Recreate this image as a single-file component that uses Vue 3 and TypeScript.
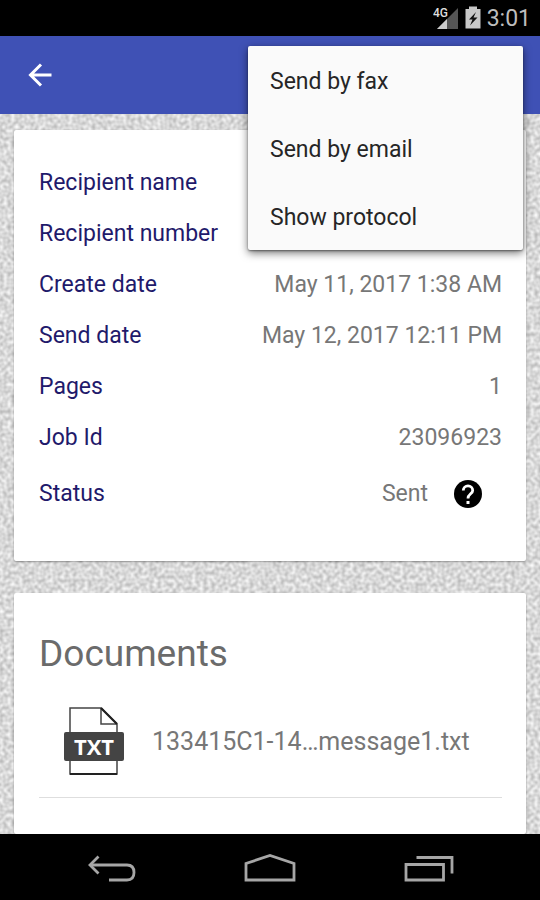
<script setup lang="ts">
interface Detail {
  label: string
  value: string
}

const menuItems: string[] = ['Send by fax', 'Send by email', 'Show protocol']

const details: Detail[] = [
  { label: 'Recipient name', value: '' },
  { label: 'Recipient number', value: '' },
  { label: 'Create date', value: 'May 11, 2017 1:38 AM' },
  { label: 'Send date', value: 'May 12, 2017 12:11 PM' },
  { label: 'Pages', value: '1' },
  { label: 'Job Id', value: '23096923' },
]

const documents: string[] = ['133415C1-14…message1.txt']
</script>

<template>
  <div class="screen">
    <div class="status-bar">
      <svg class="signal" width="26" height="24" viewBox="0 0 26 24" aria-hidden="true">
        <path d="M25 2V23H4Z" fill="#555" />
        <path d="M14 13V23H4Z" fill="#ccc" />
        <text x="0" y="11" class="network">4G</text>
      </svg>
      <svg width="16" height="24" viewBox="0 0 16 24" aria-hidden="true">
        <path d="M4 0.500H12V3H15.500V22.500H0.500V3H4Z" fill="#c8c8c8" />
        <path d="M11 6L4 13.500H7.500L5 19.500L12.500 11.500H8.500Z" fill="#111" />
      </svg>
      <span class="clock">3:01</span>
    </div>

    <header class="app-bar">
      <button class="back" type="button" aria-label="Back">
        <svg width="24" height="24" viewBox="0 0 24 24" fill="none" stroke="#fff" stroke-width="3">
          <path d="M23.500 12H3M13 1.500L2.500 12L13 22.500" />
        </svg>
      </button>
      <div class="menu" role="menu">
        <button v-for="item in menuItems" :key="item" type="button" role="menuitem">{{ item }}</button>
      </div>
    </header>

    <main class="content">
      <svg class="texture" aria-hidden="true">
        <filter id="grain" x="0" y="0" width="100%" height="100%" color-interpolation-filters="sRGB">
          <feTurbulence type="fractalNoise" baseFrequency="0.26" numOctaves="1" seed="4" />
          <feColorMatrix
            values="0.4 0 0 0 0.650  0.4 0 0 0 0.650  0.4 0 0 0 0.650  0 0 0 0 1"
          />
        </filter>
        <rect width="100%" height="100%" filter="url(#grain)" />
      </svg>

      <section class="card summary">
        <dl>
          <div v-for="detail in details" :key="detail.label" class="row">
            <dt>{{ detail.label }}</dt>
            <dd>{{ detail.value }}</dd>
          </div>
          <div class="row status">
            <dt>Status</dt>
            <dd>
              <span>Sent</span>
              <button class="help" type="button" aria-label="Status help">
                <svg width="28" height="28" viewBox="0 0 28 28">
                  <circle cx="14" cy="14" r="14" fill="#000" />
                  <path
                    d="M9.300 10.500A4.700 4.700 0 0 1 18.700 10.500C18.700 13.800 14 14 14 18.500"
                    fill="none"
                    stroke="#fff"
                    stroke-width="2.800"
                  />
                  <path d="M12.500 21H15.500V24H12.500Z" fill="#fff" />
                </svg>
              </button>
            </dd>
          </div>
        </dl>
      </section>

      <section class="card documents">
        <h2>Documents</h2>
        <ul>
          <li v-for="name in documents" :key="name">
            <svg width="62" height="70" viewBox="0 0 62 70" aria-hidden="true">
              <path
                d="M6 1H37L53 17V67H6ZM37 1V17H53"
                fill="#fff"
                stroke="#444"
                stroke-width="1.500"
              />
              <path d="M37 1L53 17M6 67H53" stroke="#222" stroke-width="2.200" />
              <rect x="0" y="25" width="60" height="29" rx="2" fill="#444" />
              <text x="30" y="48" text-anchor="middle" class="file-type">TXT</text>
            </svg>
            <span>{{ name }}</span>
          </li>
        </ul>
      </section>
    </main>

    <nav class="nav-bar">
      <button type="button" aria-label="Back">
        <svg width="50" height="30" viewBox="0 0 50 30" fill="none" stroke="#a6a6a6" stroke-width="2.800">
          <path d="M4 11H41Q48 11 48 18.500T41 26H23" />
          <path d="M12.500 2.500L4 11L12.500 19.500" />
        </svg>
      </button>
      <button type="button" aria-label="Home">
        <svg width="52" height="30" viewBox="0 0 52 30" fill="none" stroke="#a6a6a6" stroke-width="2.800">
          <path d="M2 26V9.500L26 1.500L50 9.500V26Z" />
        </svg>
      </button>
      <button type="button" aria-label="Recent apps">
        <svg width="50" height="30" viewBox="0 0 50 30" fill="none" stroke="#a6a6a6" stroke-width="2.800">
          <path d="M2 10.500H39.500V26H2ZM12.500 3.500H48V19.500" />
        </svg>
      </button>
    </nav>
  </div>
</template>

<style>
body {
  margin: 0;
}
</style>

<style scoped>
.screen {
  display: flex;
  flex-direction: column;
  height: 100vh;
  font-family: Roboto, "Liberation Sans", sans-serif;
  font-size: 23px;
  line-height: 28px;
  color: #777;
}

button {
  padding: 0;
  border: 0;
  background: none;
  font: inherit;
  color: inherit;
}

svg {
  display: block;
}

.status-bar {
  display: flex;
  align-items: center;
  justify-content: flex-end;
  gap: 6px;
  height: 36px;
  padding-right: 9px;
  background: #000;
}

.network {
  font-size: 12px;
  font-weight: 500;
  fill: #ddd;
}

.clock {
  padding-top: 2px;
  color: #bdbdbd;
}

.app-bar {
  position: relative;
  z-index: 1;
  display: flex;
  align-items: center;
  height: 78px;
  padding: 0 28px;
  background: #3f51b5;
}

.menu {
  position: absolute;
  top: 10px;
  right: 17px;
  display: flex;
  flex-direction: column;
  width: 275px;
  border-radius: 2px;
  background: #fafafa;
  box-shadow: 0 3px 8px rgba(0, 0, 0, 0.55), 0 1px 2px rgba(0, 0, 0, 0.4);
}

.menu button {
  height: 68px;
  padding: 3px 22px 0;
  text-align: left;
  color: #262626;
}

.content {
  position: relative;
  display: flex;
  flex: 1;
  flex-direction: column;
  gap: 32px;
  min-height: 0;
  padding: 16px 14px 1px;
  overflow: hidden;
  background: #d6d6d6;
}

.texture {
  position: absolute;
  inset: 0;
  width: 100%;
  height: 100%;
}

.card {
  position: relative;
  padding: 27px 24px 36px 25px;
  border-radius: 2px;
  background: #fff;
  box-shadow: 0 1px 2px rgba(0, 0, 0, 0.35);
}

dl,
dd,
h2,
ul {
  margin: 0;
  padding: 0;
}

.row {
  display: flex;
  align-items: center;
  justify-content: space-between;
  height: 51px;
}

dt {
  color: #1f1a6b;
}

.status {
  height: 62px;
}

.status dd {
  display: flex;
  align-items: center;
  gap: 26px;
  padding-right: 20px;
}

.documents {
  flex: 1;
  padding-top: 38px;
}

h2 {
  font-size: 37px;
  font-weight: 400;
  line-height: 46px;
  color: #6b6b6b;
}

ul {
  margin-top: 10px;
}

li {
  display: flex;
  align-items: center;
  gap: 26px;
  height: 110px;
  padding-left: 25px;
  border-bottom: 1px solid #dedede;
  font-size: 25px;
}

.file-type {
  font-family: "Open Sans", sans-serif;
  font-size: 22px;
  font-weight: 700;
  fill: #fff;
}

.nav-bar {
  display: flex;
  align-items: center;
  justify-content: space-around;
  box-sizing: border-box;
  height: 66px;
  padding: 4px 32px 0;
  background: #000;
}
</style>
